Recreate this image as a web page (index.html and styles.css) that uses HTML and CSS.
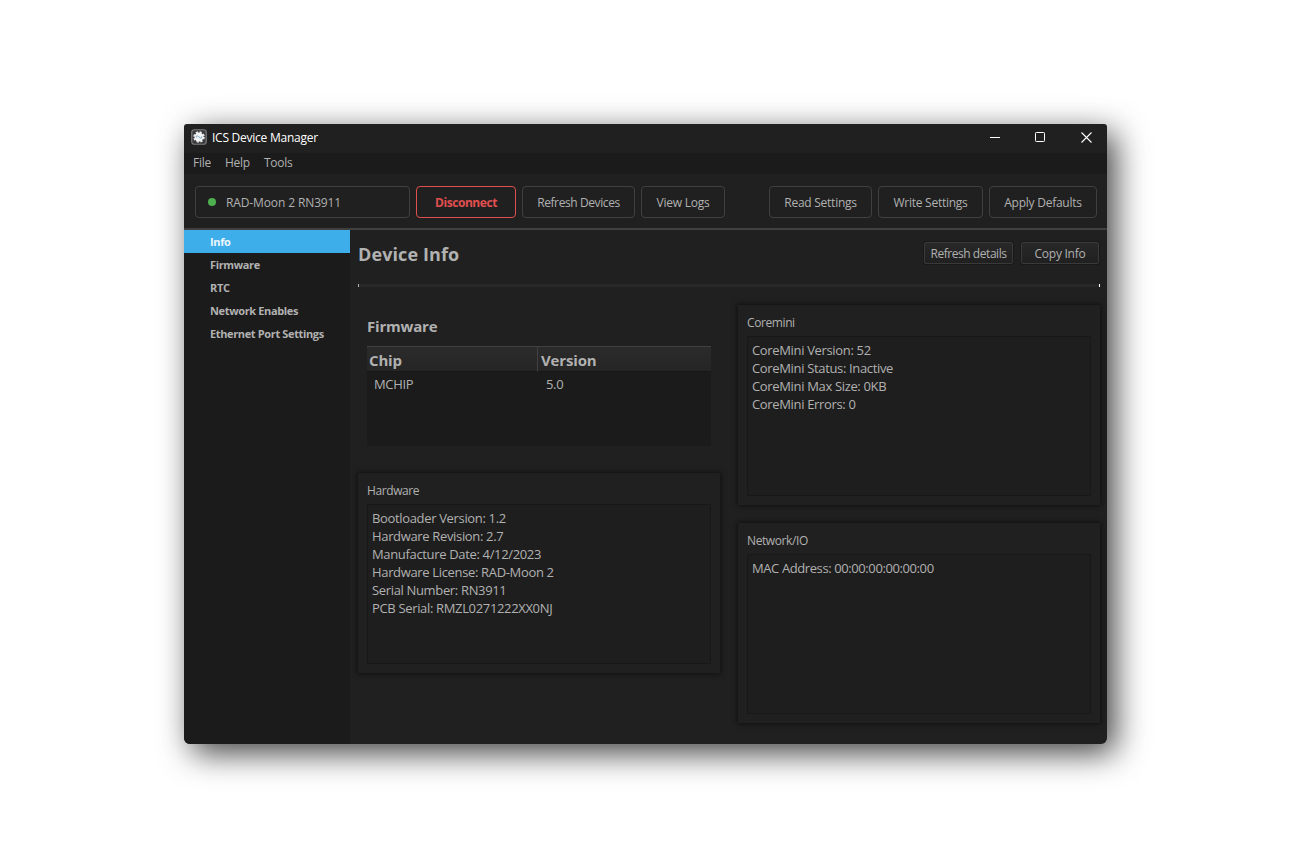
FILE: index.html
```html
<!DOCTYPE html>
<html lang="en">
<head>
  <meta charset="UTF-8" />
  <meta name="viewport" content="width=device-width, initial-scale=1.0"/>
  <title>ICS Device Manager</title>
  <link rel="stylesheet" href="styles.css">
</head>
<body>

  <div class="window">
    <header class="title-bar">
      <svg class="app-icon" width="16" height="16" viewBox="0 0 16 16">
        <rect x="0.75" y="0.75" width="14.5" height="14.5" rx="2.5" fill="#3a3a3c" stroke="#7b7b7d" stroke-width="1.2"/>
        <circle cx="8" cy="8" r="4.8" fill="none" stroke="#e6e6e6" stroke-width="2" stroke-dasharray="2.2 1.57"/>
        <circle cx="8" cy="8" r="4.5" fill="#f2f4f5"/>
        <path d="M5.3 8.6v-1.6h2l1.6 2h1.8v-1.6" fill="none" stroke="#7fa8c4" stroke-width="0.9"/>
      </svg>
      <span class="title">ICS Device Manager</span>
      <div class="window-controls">
        <svg width="10" height="11" viewBox="0 0 10 11"><path d="M0 5.5h10" stroke="#fff"/></svg>
        <svg width="10" height="11" viewBox="0 0 10 11"><rect x="0.5" y="0.5" width="9" height="9" rx="0.8" fill="none" stroke="#fff"/></svg>
        <svg width="11" height="11" viewBox="0 0 11 11"><path d="M0.5 0.5l10 10M10.5 0.5l-10 10" stroke="#fff" stroke-width="1.1"/></svg>
      </div>
    </header>

    <nav class="menu-bar">
      <a>File</a>
      <a>Help</a>
      <a>Tools</a>
    </nav>

    <div class="toolbar">
      <div class="device-select"><span class="status-dot"></span><span class="device-name">RAD-Moon 2 RN3911</span></div>
      <button class="btn disconnect">Disconnect</button>
      <button class="btn refresh">Refresh Devices</button>
      <button class="btn logs">View Logs</button>
      <div class="spacer"></div>
      <button class="btn read">Read Settings</button>
      <button class="btn write">Write Settings</button>
      <button class="btn defaults">Apply Defaults</button>
    </div>

    <div class="main">
      <ul class="sidebar">
        <li class="active">Info</li>
        <li>Firmware</li>
        <li>RTC</li>
        <li>Network Enables</li>
        <li>Ethernet Port Settings</li>
      </ul>

      <div class="content">
        <div class="page-head">
          <h1>Device Info</h1>
          <button class="small-btn details">Refresh details</button>
          <button class="small-btn copy">Copy Info</button>
        </div>
        <div class="divider"></div>

        <div class="columns">
          <div class="column">
            <section class="firmware">
              <h2>Firmware</h2>
              <div class="table-box">
                <table>
                  <thead>
                    <tr><th>Chip</th><th>Version</th></tr>
                  </thead>
                  <tbody>
                    <tr><td>MCHIP</td><td>5.0</td></tr>
                  </tbody>
                </table>
              </div>
            </section>

            <section class="card">
              <h3>Hardware</h3>
              <div class="info-box">
                <p>Bootloader Version: 1.2</p>
                <p>Hardware Revision: 2.7</p>
                <p>Manufacture Date: 4/12/2023</p>
                <p>Hardware License: RAD-Moon 2</p>
                <p>Serial Number: RN3911</p>
                <p>PCB Serial: RMZL0271222XX0NJ</p>
              </div>
            </section>
          </div>

          <div class="column">
            <section class="card">
              <h3>Coremini</h3>
              <div class="info-box">
                <p>CoreMini Version: 52</p>
                <p>CoreMini Status: Inactive</p>
                <p>CoreMini Max Size: 0KB</p>
                <p>CoreMini Errors: 0</p>
              </div>
            </section>

            <section class="card">
              <h3>Network/IO</h3>
              <div class="info-box">
                <p class="mac">MAC Address: 00:00:00:00:00:00</p>
              </div>
            </section>
          </div>
        </div>
      </div>
    </div>
  </div>

</body>
</html>
```
FILE: styles.css
```css
* {
  box-sizing: border-box;
}

body {
  margin: 0;
  min-height: 100vh;
  padding-top: 124px;
  background: #fff;
  color: #b1b1b1;
  font-family: 'Open Sans', 'Noto Sans', sans-serif;
  font-size: 12px;
}

h1, h2, h3, p, ul {
  margin: 0;
  padding: 0;
}

.window {
  width: 923px;
  height: 620px;
  margin: 0 auto;
  display: flex;
  flex-direction: column;
  background: #202020;
  border-radius: 3px 3px 6px 6px;
  box-shadow: 8px 9px 32px rgba(0,0,0,0.75);
  overflow: hidden;
}

.title-bar {
  height: 29px;
  display: flex;
  align-items: center;
  padding: 0 15px 3px 7px;
  color: #fff;
}

.title {
  margin-left: 5px;
  padding-top: 1px;
  letter-spacing: -0.25px;
}

.window-controls {
  margin-left: auto;
  display: flex;
  gap: 35px;
}

.window-controls svg:last-child {
  margin-left: 1px;
}

.menu-bar {
  height: 21px;
  display: flex;
  gap: 14px;
  padding: 0 9px;
  line-height: 20px;
  letter-spacing: -0.25px;
  background: #1b1b1b;
}

.toolbar {
  height: 56px;
  display: flex;
  gap: 6px;
  padding: 12px 10px 0 11px;
  border-bottom: 2px solid #404040;
}

.device-select, .btn {
  height: 32px;
  border: 1px solid #404040;
  border-radius: 4px;
}

.device-select {
  width: 215px;
  display: flex;
  align-items: center;
  padding-left: 12px;
}

.device-name {
  padding-top: 1px;
  letter-spacing: -0.12px;
}

.status-dot {
  width: 8px;
  height: 8px;
  margin-right: 10px;
  border-radius: 50%;
  background: #4caf50;
}

.btn, .small-btn {
  padding: 1px 0 0;
  color: #b1b1b1;
  font-family: inherit;
  font-size: 12px;
  letter-spacing: -0.25px;
  white-space: nowrap;
}

.btn {
  background: #202020;
}

.disconnect {
  width: 100px;
  color: #e04f4f;
  border-color: #e04f4f;
  font-weight: 700;
  letter-spacing: -0.45px;
}

.refresh {
  width: 113px;
  letter-spacing: -0.4px;
}

.logs { width: 84px; }
.read { width: 103px; }
.write { width: 105px; }
.defaults { width: 108px; }

.spacer {
  flex: 1;
}

.main {
  flex: 1;
  display: flex;
}

.sidebar {
  width: 166px;
  list-style: none;
  background: #1b1b1b;
  font-size: 11px;
  font-weight: 700;
  letter-spacing: -0.36px;
}

.sidebar li {
  height: 23px;
  padding-left: 26px;
  line-height: 23px;
}

.sidebar .active {
  background: #3daee9;
  color: #eef6fb;
}

.content {
  flex: 1;
  padding: 0 7px 0 8px;
}

.page-head {
  height: 54px;
  display: flex;
  gap: 8px;
  padding-right: 1px;
}

h1 {
  margin-right: auto;
  font-size: 18px;
  line-height: 48px;
  letter-spacing: 0.1px;
}

.small-btn {
  height: 22px;
  margin-top: 12px;
  background: linear-gradient(#282828, #202020);
  border: 1px solid #3a3a3a;
  border-radius: 2px;
  box-shadow: 0 0 0 1px #191919;
}

.details {
  width: 89px;
  letter-spacing: -0.45px;
}

.copy { width: 78px; }

.divider {
  height: 3px;
  background: #282828;
  border-left: 1px solid #b1b1b1;
  border-right: 1px solid #fff;
}

.columns {
  display: flex;
  gap: 18px;
  padding-top: 18px;
}

.column {
  width: 362px;
  display: flex;
  flex-direction: column;
  gap: 18px;
}

.firmware {
  height: 150px;
  padding: 9px;
}

h2 {
  font-size: 15px;
  line-height: 24px;
  letter-spacing: -0.2px;
}

.table-box {
  height: 100px;
  margin-top: 8px;
  background: #1b1b1b;
}

table {
  width: 100%;
  table-layout: fixed;
  border-collapse: separate;
  border-spacing: 0;
  text-align: left;
}

th {
  height: 26px;
  padding: 2px 2px 1px;
  font-size: 15px;
  line-height: 20px;
  letter-spacing: -0.15px;
  background: linear-gradient(#2b2b2b, #252525);
  border-top: 1px solid #404040;
  border-bottom: 1px solid #181818;
}

th:first-child {
  width: 171px;
  border-right: 1px solid #404040;
}

th + th {
  padding-left: 3px;
}

td {
  padding: 3px 7px;
  font-size: 13px;
  line-height: 18px;
  letter-spacing: -0.35px;
}

td + td {
  padding-left: 8px;
}

.card {
  height: 200px;
  padding: 9px;
  background: #202020;
  box-shadow: 0 0 5px 1px rgba(0,0,0,0.5);
}

h3 {
  font-size: 12px;
  font-weight: 400;
  line-height: 18px;
  letter-spacing: -0.4px;
}

.info-box {
  height: 160px;
  margin-top: 4px;
  padding: 4px;
  background: #1e1e1e;
  border: 1px solid #181818;
}

.info-box p {
  font-size: 13px;
  line-height: 18px;
  letter-spacing: -0.34px;
}

.info-box .mac {
  letter-spacing: -0.4px;
}
```
